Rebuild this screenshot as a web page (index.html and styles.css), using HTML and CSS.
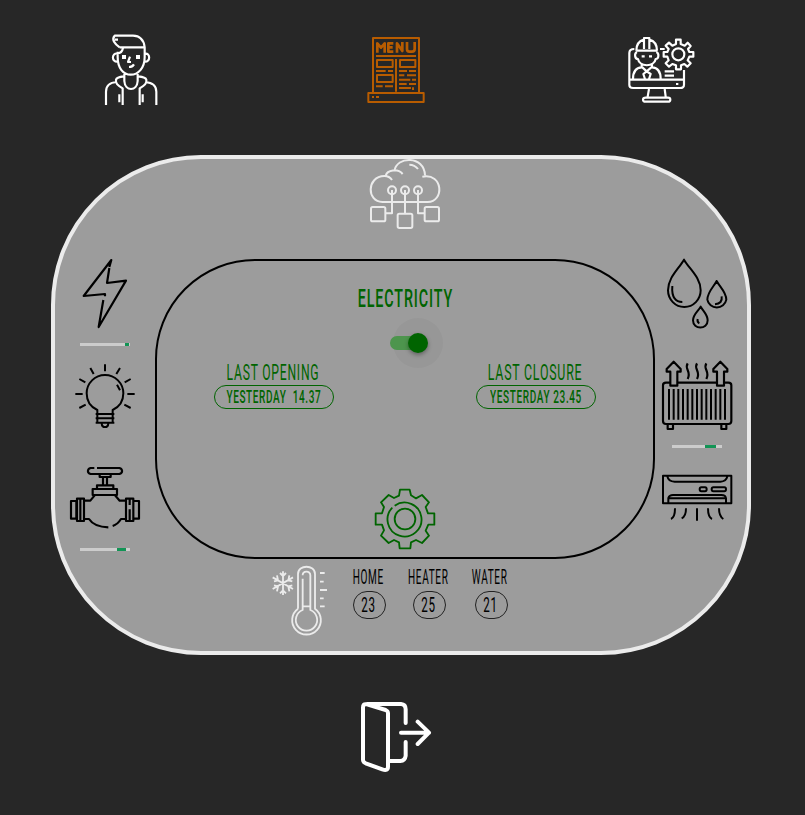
FILE: index.html
```html
<!DOCTYPE html>
<html lang="en">
<head>
<meta charset="utf-8">
<title>Home control</title>
<link rel="stylesheet" href="styles.css">
</head>
<body>
<nav class="top">
  <svg class="icon" viewBox="0 30 210 210" stroke-width="6.5">
    <path d="M74 67C58 56 49 43 59 32H114C134 32 147 45 149 67V96C149 130 129 149 107 149S68 130 68 96V80M59 44H69M74 67H148M84 69C82 79 76 85 67 85M68 86C49 82 49 112 68 110M149 86C167 82 167 112 149 110M105 95L99 111H108M102 126Q112 126 117 118M88 147V168C90 200 126 200 128 168V147M83 240V190C67 180 61 175 63 164Q65 156 86 154M134 240V190C150 180 156 175 154 164Q152 156 130 154M33 240V200C33 180 44 173 65 171M184 240V200C184 180 172 173 151 171M73 208V232M143 208V232"/>
    <path class="solid" d="M81 90H93V102H81ZM123 90H135V102H123Z"/>
  </svg>
  <svg class="icon menu" viewBox="3 15 210 210" stroke-width="6">
    <path d="M39 186V24H177V186M25 189H191V216H25ZM48 78H168M108 87V185M51 90H98V111H51ZM120 90H166V111H120ZM51 135H98V156H51ZM48 123H77M84 123H99M117 123H141M147 123H168M117 136H133M141 136H168M117 149H151M156 149H168M117 162H140M147 162H168M117 174H153M159 172V180M48 169H68M75 169H99M36 201H42M48 201H57"/>
    <path stroke-width="8" d="M52 68V40L63 53L74 40V68M100 40H85V65H100M85 52H98M111 68V40L127 63V36M141 36V57Q141 65 148 65H156Q164 65 164 57V36"/>
  </svg>
  <svg class="icon" viewBox="18 15 210 210" stroke-width="6.5">
    <path d="M49 62C49 44 57 33 72 29V24H88V29C103 33 111 44 111 62M49 62H111M72 28V57M88 28V57M51 66C42 70 44 87 54 87C58 112 103 112 107 87C117 87 118 70 109 66M65 79H74M87 79H96M65 102V112C46 113 39 126 39 147M96 102V112C114 113 122 126 122 147M67 112L80 124L94 112M80 124L70 132L75 147M80 124L92 132L87 147M43 57C33 57 28 61 28 69V165Q28 174 39 174H180Q192 174 192 164V120M28 149H192M120 57H134M134 124H162M134 137H162M87 177L83 200M134 177L137 200M77 203H144Q151 203 151 209T144 215H77Q69 215 69 209T77 203Z"/>
    <path class="solid" d="M168 159H175V165H168Z"/>
    <circle cx="175" cy="73" r="18"/>
    <path d="M168 29H182V42L194 47L203 38L212 48L204 57L208 66H220V80H208L203 91L212 100L202 110L193 102L183 106V118H168V106L157 102L147 110L137 100L146 91L142 80H131V66H142L146 57L137 47L147 38L157 47L168 42Z"/>
  </svg>
</nav>

<main class="panel">
  <svg class="icon cloud" viewBox="30 24 210 210" stroke-width="6">
    <path d="M67 156C20 156 19 79 73 78C84 78 91 82 96 90M77 77C82 59 113 55 128 72M103 64C109 17 193 16 195 76M187 80C251 68 253 156 203 156H67M148 44Q164 44 174 57"/>
    <circle cx="96" cy="121" r="12"/><circle cx="135" cy="121" r="12"/><circle cx="174" cy="121" r="12"/>
    <path d="M96 120V190H78M135 120V189M174 120V190H193"/>
    <rect x="33" y="171" width="43" height="43" rx="5"/><rect x="113" y="191" width="44" height="43" rx="5"/><rect x="194" y="171" width="43" height="43" rx="5"/>
  </svg>

  <section class="side left">
    <div class="device">
      <svg class="icon" viewBox="15 27 210 210" stroke-width="6.5"><path d="M133 51L139 30L56 138L120 132V139M133 54L126 99L183 92L101 231L115 150"/></svg>
      <div class="bar"><i style="margin-left:45px;width:4px"></i></div>
    </div>
    <div class="device">
      <svg class="icon" viewBox="15 333 210 210" stroke-width="6"><path d="M97 492V480C72 469 65 451 65 430A55 55 0 0 1 175 430C175 451 167 469 143 480V492M92 492H148M92 505H148M92 518H148M97 492V518M143 492V518M110 520C111 535 129 535 130 520M120 343V364M76 354L86 372M165 354L154 372M43 387L61 397M197 387L179 397M31 432H53M187 432H209M43 474L62 464M197 474L178 464M156 404L165 421"/></svg>
    </div>
    <div class="device">
      <svg class="icon" viewBox="15 27 210 210" stroke-width="6.5"><path d="M88 39H77C66 42 66 54 77 57H163C174 54 174 42 163 39H96M104 59V66H137V59M114 67V89M126 67V89M96 100V91H145V100M83 102H156V120H83ZM89 121L76 137H59M150 121L164 137H181M59 192H72C83 209 99 216 130 217M143 213Q158 208 168 192H181M18 138H34V191H18ZM36 131H57V198H36ZM46 132V197M183 131H205V198H183ZM194 131V150M194 163V197M206 138H222V191H206"/></svg>
      <div class="bar"><i style="margin-left:37px;width:9px"></i></div>
    </div>
  </section>

  <section class="screen">
    <h1><span>ELECTRICITY</span></h1>
    <div class="switch"><i class="track"></i><i class="knob"></i></div>
    <div class="times">
      <div class="time"><h2><span>LAST OPENING</span></h2><div class="pill"><span>YESTERDAY&nbsp; 14.37</span></div></div>
      <div class="time"><h2 class="closure"><span>LAST CLOSURE</span></h2><div class="pill"><span>YESTERDAY 23.45</span></div></div>
    </div>
    <svg class="gear" viewBox="30 357 180 180" stroke-width="5.5">
      <circle cx="120" cy="447" r="31"/>
      <path d="M89 407A51 51 0 1 1 82 413M105 359H134L138 376Q147 382 153 385L171 375L192 397L182 411L189 430H208V464H190L182 482L192 497L171 519L153 510L138 517L136 535H104L102 517L87 510L71 519L48 497L57 481L51 464H32V430H51L57 411L48 397L71 375L87 384L102 377Z"/>
    </svg>
  </section>

  <section class="side right">
    <div class="device">
      <svg class="icon" viewBox="21 27 210 210" stroke-width="6"><path d="M87 29C72 56 39 82 39 121A49 50 0 0 0 137 121C137 82 102 56 87 29ZM185 93C177 109 157 126 157 149A29 29 0 0 0 214 149C214 126 193 109 185 93ZM137 170C130 183 114 193 114 211C114 240 158 240 158 211C158 193 144 183 137 170ZM52 108C49 143 63 156 82 156M200 139Q203 161 180 163M128 207Q126 217 133 220"/></svg>
    </div>
    <div class="device">
      <svg class="icon" viewBox="21 33 210 210" stroke-width="6.5"><path d="M45 98H33Q24 98 24 106V213Q24 222 33 222H220Q229 222 229 213V106Q229 98 220 98H207M68 98H184M46 107V65H35V57L56 35L77 57V65H67V107ZM186 107V65H175V57L196 35L217 57V65H207V107ZM98 40C87 57 110 63 98 87M126 40C115 57 138 63 126 87M154 40C143 57 166 63 154 87M38 224V237H54V224M199 224V237H214V224"/><path stroke-width="6" d="M42 117V209M56 117V209M70 117V209M84 117V209M98 117V209M112 117V209M126 117V209M140 117V209M154 117V209M168 117V209M182 117V209M196 117V209M210 117V209"/></svg>
      <div class="bar"><i style="margin-left:33px;width:11px"></i></div>
    </div>
    <div class="device">
      <svg class="icon" viewBox="21 342 210 210" stroke-width="6"><path d="M24 377H229V460H24ZM37 379Q40 394 59 395H196Q214 394 217 379M40 458V444Q43 435 54 435H199Q212 435 213 445V458M42 445H211M139 412H150Q155 412 155 418T150 424H139Q134 424 134 418T139 412ZM175 412H208Q213 412 213 418T208 424H175Q170 424 170 418T175 412ZM60 475C60 491 58 503 48 507M93 475C93 491 90 501 80 505M126 475V512M159 475C159 491 162 503 171 507M192 475C192 491 195 501 205 507"/></svg>
    </div>
  </section>

  <section class="climate">
    <svg class="icon" viewBox="15 18 210 210" stroke-width="5.5">
      <path d="M114 146V42C114 13 165 13 165 42V146A43 43 0 1 1 114 146M128 56V150A32 32 0 1 0 151 150V46C151 31 128 32 128 46M130 139H151M180 39H194M180 65H191M180 90H201M180 115H191M180 139H194"/>
      <path d="M69 34V105M38 52L99 87M99 52L38 87M60 39L69 48L78 39M60 100L69 91L78 100M42 64L54 61L51 46M97 64L85 61L88 46M42 76L54 79L51 94M97 76L85 79L88 94"/>
    </svg>
    <div class="reading home"><h3><span>HOME</span></h3><div class="value"><span>23</span></div></div>
    <div class="reading heater"><h3><span>HEATER</span></h3><div class="value"><span>25</span></div></div>
    <div class="reading water"><h3><span>WATER</span></h3><div class="value"><span>21</span></div></div>
  </section>
</main>

<footer class="bottom">
  <svg class="icon" viewBox="33 36 210 210" stroke-width="12" stroke-linecap="round"><path d="M51 42H153Q167 43 167 58V99M167 156V197Q165 212 151 213H120M47 43C41 43 39 47 39 53V210Q39 216 47 220L97 238Q114 244 114 230V70Q114 63 107 60L51 43M153 128H237M203 95L237 128L203 162"/></svg>
</footer>
</body>
</html>
```
FILE: styles.css
```css
* { box-sizing: border-box; }
body {
  margin: 0;
  width: 805px;
  height: 815px;
  overflow: hidden;
  background: #272727;
  color: #000;
  font-family: Roboto, "Liberation Sans", sans-serif;
}
h1, h2, h3 { margin: 0; font-weight: 400; }
span { display: inline-block; white-space: nowrap; letter-spacing: .063em; }
svg { display: block; fill: none; stroke: currentColor; stroke-linejoin: round; overflow: visible; }
.solid { fill: currentColor; stroke: none; }
.icon { width: 70px; height: 70px; flex: none; }

.top {
  display: flex;
  justify-content: space-between;
  padding: 35px 109px 0 95px;
  height: 155px;
  color: #fff;
}
.menu { color: #b85c00; }

.panel {
  display: grid;
  grid-template: 100px 300px 1fr / 100px 500px 92px;
  width: 700px;
  height: 500px;
  margin-left: 51px;
  border: 4px solid #ebebeb;
  border-radius: 150px;
  background: #9c9c9c;
}
.cloud {
  grid-column: 1 / -1;
  margin: -1px 0 0 315px;
  color: #ebebeb;
}
.side { display: grid; grid-template-rows: 102px 103px 1fr; }
.left { padding-left: 15px; }
.right { padding-left: 7px; }
.bar {
  display: flex;
  width: 50px;
  height: 3px;
  margin: 14px 0 0 10px;
  background: #ccc;
}
.bar i { background: #129455; }

.screen {
  display: flex;
  flex-direction: column;
  align-items: center;
  border: 2px solid #000;
  border-radius: 100px;
  color: #006400;
}
h1 {
  height: 32px;
  margin-top: 21px;
  font-size: 26.5px;
  font-weight: 500;
  line-height: 32px;
}
h1 span { transform: scaleX(.54); }
.switch {
  display: flex;
  align-items: center;
  width: 50px;
  height: 50px;
  margin: 4px 0 0 26px;
  border-radius: 50%;
  background: rgba(0, 0, 0, .03);
}
.track {
  flex: none;
  width: 34px;
  height: 14px;
  margin-left: -3px;
  border-radius: 7px;
  background: #4d954d;
}
.knob {
  flex: none;
  width: 20px;
  height: 20px;
  margin-left: -16px;
  border-radius: 50%;
  background: #006400;
  box-shadow: 0 2px 4px rgba(0, 0, 0, .35);
}
.times {
  display: flex;
  gap: 142px;
  margin: -8px 0 0 0;
}
.time { display: flex; flex-direction: column; align-items: center; width: 120px; }
h2 {
  display: flex;
  justify-content: center;
  height: 25px;
  margin-left: -3px;
  font-size: 22.5px;
  line-height: 24px;
}
h2 span { transform: scaleX(.54); }
.closure { margin-left: -2px; }
.closure span { transform: scaleX(.55); }
.pill {
  display: flex;
  justify-content: center;
  width: 120px;
  height: 24px;
  border: 1.5px solid #006400;
  border-radius: 12px;
  font-size: 18.5px;
  font-weight: 500;
  line-height: 23px;
}
.pill span { flex: none; transform: scaleX(.54); }
.gear { width: 60px; height: 60px; margin-top: 80px; }

.climate {
  grid-column: 1 / -1;
  display: flex;
  padding: 7px 0 0 210px;
}
.climate .icon { color: #ebebeb; }
.reading { display: flex; flex-direction: column; align-items: center; }
.home { width: 34px; margin-left: 17px; }
.heater { width: 34px; margin-left: 26px; }
.water { width: 34px; margin-left: 28px; }
h3 {
  display: flex;
  justify-content: center;
  height: 25px;
  margin-left: -2px;
  font-size: 19.5px;
  line-height: 23px;
}
h3 span { transform: scaleX(.515); }
.value {
  display: flex;
  justify-content: center;
  width: 33px;
  height: 28px;
  border: 1px solid #222;
  border-radius: 14px;
  font-size: 20px;
  line-height: 27px;
}
.value span { transform: scaleX(.58); }

.bottom { padding: 47px 0 0 361px; color: #fff; }
```
